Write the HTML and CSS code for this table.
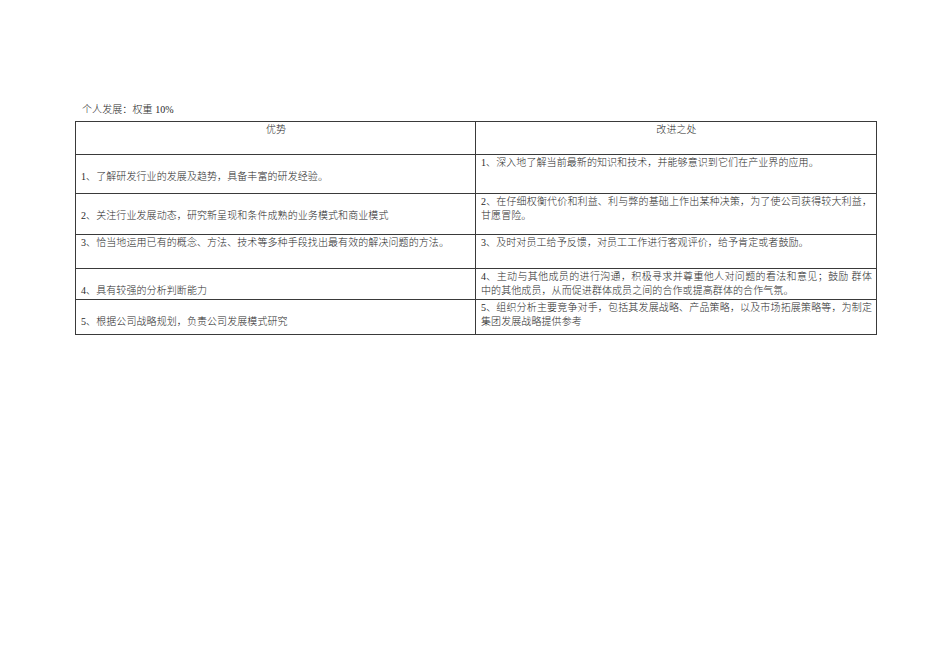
FILE: index.html
```html
<!DOCTYPE html>
<html lang="zh">
<head>
<meta charset="utf-8">
<title>个人发展</title>
<link rel="stylesheet" href="styles.css">
</head>
<body>
<div class="page">
  <p class="caption">个人发展：权重 10%</p>
  <table class="grid">
    <colgroup><col class="c1"><col class="c2"></colgroup>
    <tr class="r0">
      <th>优势</th>
      <th>改进之处</th>
    </tr>
    <tr class="r1">
      <td class="drop">1、了解研发行业的发展及趋势，具备丰富的研发经验。</td>
      <td>1、深入地了解当前最新的知识和技术，并能够意识到它们在产业界的应用。</td>
    </tr>
    <tr class="r2">
      <td class="drop">2、关注行业发展动态，研究新呈现和条件成熟的业务模式和商业模式</td>
      <td>2、在仔细权衡代价和利益、利与弊的基础上作出某种决策，为了使公司获得较大利益，甘愿冒险。</td>
    </tr>
    <tr class="r3">
      <td>3、恰当地运用已有的概念、方法、技术等多种手段找出最有效的解决问题的方法。</td>
      <td>3、及时对员工给予反馈，对员工工作进行客观评价，给予肯定或者鼓励。</td>
    </tr>
    <tr class="r4">
      <td class="drop">4、具有较强的分析判断能力</td>
      <td><span class="fill">4、主动与其他成员的进行沟通，积极寻求并尊重他人对问题的看法和意见；鼓励 群体</span>中的其他成员，从而促进群体成员之间的合作或提高群体的合作气氛。</td>
    </tr>
    <tr class="r5">
      <td class="drop">5、根据公司战略规划，负责公司发展模式研究</td>
      <td>5、组织分析主要竞争对手，包括其发展战略、产品策略，以及市场拓展策略等，为制定集团发展战略提供参考</td>
    </tr>
  </table>
</div>
</body>
</html>
```
FILE: styles.css
```css
html, body {
  margin: 0;
  padding: 0;
  background: #ffffff;
}
body {
  font-family: "Liberation Serif", "Noto Sans CJK SC", serif;
  font-size: 10px;
  font-weight: 300;
  color: #2a2a2a;
  letter-spacing: 0.08px;
}
.page {
  padding: 103px 0 0 75px;
}
.caption {
  margin: 0 0 4px 7px;
  line-height: 14px;
}
.grid {
  border-collapse: collapse;
  table-layout: fixed;
  width: 801px;
}
.c1 { width: 400px; }
.c2 { width: 401px; }
.grid th,
.grid td {
  border: 1px solid #3a3a3a;
  padding: 1px 4px 0 5px;
  line-height: 14px;
  vertical-align: top;
  text-align: justify;
  font-weight: 300;
}
.grid th {
  text-align: center;
}
.grid td.drop {
  padding-top: 15px;
}
.fill {
  display: block;
  text-align: justify;
  text-align-last: justify;
}
.r0 { height: 33px; }
.r1 { height: 39px; }
.r2 { height: 41px; }
.r3 { height: 34px; }
.r4 { height: 31px; }
.r5 { height: 35px; }
```
